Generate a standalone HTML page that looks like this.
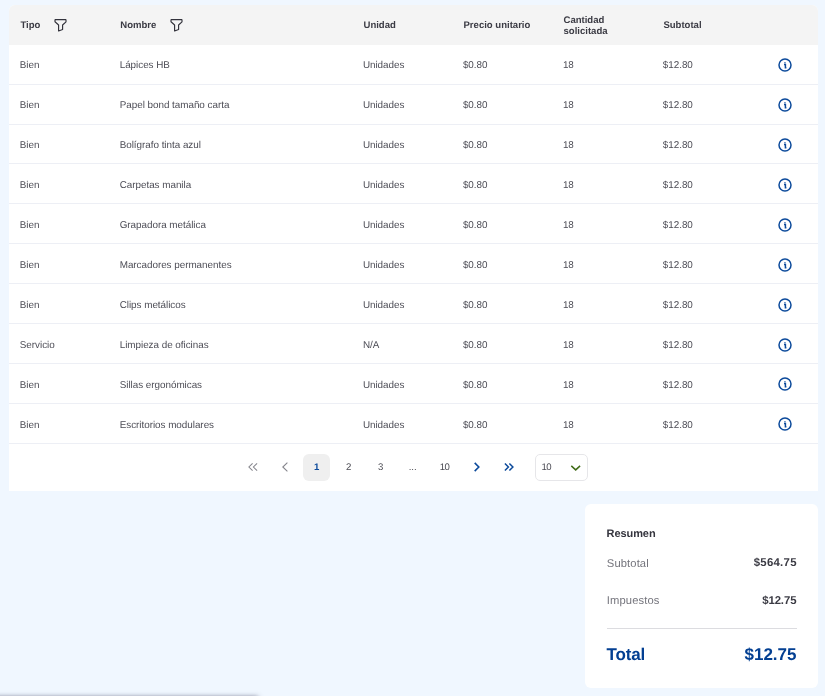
<!DOCTYPE html>
<html lang="es">
<head>
<meta charset="utf-8">
<title>Detalle de solicitud</title>
<style>
*{box-sizing:border-box;margin:0;padding:0}
html,body{width:825px;height:696px;overflow:hidden}
body{background:#f0f7ff;font-family:"Liberation Sans",sans-serif;color:#4d4d56;position:relative;font-size:9.9px;letter-spacing:-.03px;text-rendering:geometricPrecision}
.card{position:absolute;left:9px;top:5px;width:809px;height:485.500px;background:#fff;border-radius:6px 6px 0 0;overflow:hidden;will-change:transform}
.row{position:absolute;left:0;width:809px;height:39.930px}
.line{position:absolute;left:0;width:809px;height:1px;background:#edeff5}
.row.head{top:0;height:39.600px;background:#f4f4f4;font-weight:bold;color:#3b3b44;font-size:9.55px;letter-spacing:0}
.c{position:absolute;top:1.3px;line-height:12px;height:39.930px;display:flex;align-items:center;white-space:nowrap}
.c1{left:10.800px}.c2{left:110.700px}.c3{left:353.900px}.c4{left:453.900px}.c5{left:553.900px}.c6{left:653.800px}.c7{left:769.100px;top:.5px}
.head .c{top:.9px;margin-left:.6px}
.lo .c{top:2px}
.lo .c7{top:.5px}
.two{line-height:11px;white-space:normal}
.filt{margin-left:14px;display:block;position:relative;top:-.4px}
.info{display:block}
.pag{position:absolute;left:0;top:439px;width:809px;height:46.500px;font-size:9.6px}
.pg{position:absolute;top:9.700px;height:27.200px;width:26.700px;display:flex;align-items:center;justify-content:center;color:#4a4a52}
.pg.act{background:#efefef;border-radius:6px;color:#0c4a9b;font-weight:bold}
.sel{position:absolute;left:526px;top:10.200px;width:52.700px;height:26.400px;border:1px solid #e6e6e9;border-radius:5px;background:#fff}
.sel span{position:absolute;left:5.500px;top:0;height:24.400px;display:flex;align-items:center}
.n10{letter-spacing:-.5px}
.sel svg{position:absolute;left:33.500px;top:8.500px}
.sum{position:absolute;left:585.400px;top:504px;width:232.800px;height:183.500px;background:#fff;border-radius:6px;will-change:transform}
.sum div{position:absolute;white-space:nowrap;line-height:1.15}
.sum .t{left:21.600px;font-weight:bold;color:#35353e;font-size:11px;letter-spacing:-.08px}
.sum .l{left:21.800px;color:#74747c;font-size:11.2px;letter-spacing:.12px}
.sum .v{right:21.300px;font-weight:bold;color:#3b3b44;font-size:11.4px}
.sum hr{position:absolute;left:21.600px;right:21.300px;top:124px;border:none;border-top:1px solid #dcdce0}
.sum .tl{left:21.600px;color:#033f92;font-weight:bold;font-size:17px;letter-spacing:-.15px}
.sum .tv{right:21.300px;color:#033f92;font-weight:bold;font-size:17px;letter-spacing:0}
.shadow{position:absolute;left:-20px;top:697px;width:278px;height:40px;background:#fff;box-shadow:0 0 5px rgba(40,40,70,.68)}
</style>
</head>
<body>
<div class="card">
  <div class="row head">
    <div class="c c1">Tipo<svg class="filt" width="14" height="14" viewBox="0 0 14 14"><path d="M1.4 1.6h10.200a.4.400 0 0 1 .4.400v1.800L8.600 7v4.500L4.600 13V7L1 3.800V2a.4.400 0 0 1 .4-.4z" fill="none" stroke="#33333c" stroke-width="1.15" stroke-linejoin="round"/></svg></div>
    <div class="c c2">Nombre<svg class="filt" width="14" height="14" viewBox="0 0 14 14"><path d="M1.4 1.6h10.200a.4.400 0 0 1 .4.400v1.800L8.600 7v4.500L4.600 13V7L1 3.800V2a.4.400 0 0 1 .4-.4z" fill="none" stroke="#33333c" stroke-width="1.15" stroke-linejoin="round"/></svg></div>
    <div class="c c3">Unidad</div>
    <div class="c c4">Precio unitario</div>
    <div class="c c5 two">Cantidad<br>solicitada</div>
    <div class="c c6">Subtotal</div>
  </div>
  <div class="row" style="top:39.60px"><div class="c c1">Bien</div><div class="c c2">Lápices HB</div><div class="c c3">Unidades</div><div class="c c4">$0.80</div><div class="c c5">18</div><div class="c c6">$12.80</div><div class="c c7"><svg class="info" width="14" height="14" viewBox="0 0 14 14"><circle cx="7" cy="7" r="6" fill="none" stroke="#0c4a9b" stroke-width="1.5"/><rect x="6.2" y="4.3" width="1.5" height="1" fill="#0c4a9b"/><path d="M6 6.5h1.4v3.2h1" fill="none" stroke="#0c4a9b" stroke-width="1.5"/></svg></div></div>
  <div class="line" style="top:79px"></div>
  <div class="row" style="top:79.53px"><div class="c c1">Bien</div><div class="c c2">Papel bond tamaño carta</div><div class="c c3">Unidades</div><div class="c c4">$0.80</div><div class="c c5">18</div><div class="c c6">$12.80</div><div class="c c7"><svg class="info" width="14" height="14" viewBox="0 0 14 14"><circle cx="7" cy="7" r="6" fill="none" stroke="#0c4a9b" stroke-width="1.5"/><rect x="6.2" y="4.3" width="1.5" height="1" fill="#0c4a9b"/><path d="M6 6.5h1.4v3.2h1" fill="none" stroke="#0c4a9b" stroke-width="1.5"/></svg></div></div>
  <div class="line" style="top:119px"></div>
  <div class="row" style="top:119.46px"><div class="c c1">Bien</div><div class="c c2">Bolígrafo tinta azul</div><div class="c c3">Unidades</div><div class="c c4">$0.80</div><div class="c c5">18</div><div class="c c6">$12.80</div><div class="c c7"><svg class="info" width="14" height="14" viewBox="0 0 14 14"><circle cx="7" cy="7" r="6" fill="none" stroke="#0c4a9b" stroke-width="1.5"/><rect x="6.2" y="4.3" width="1.5" height="1" fill="#0c4a9b"/><path d="M6 6.5h1.4v3.2h1" fill="none" stroke="#0c4a9b" stroke-width="1.5"/></svg></div></div>
  <div class="line" style="top:158px"></div>
  <div class="row" style="top:159.39px"><div class="c c1">Bien</div><div class="c c2">Carpetas manila</div><div class="c c3">Unidades</div><div class="c c4">$0.80</div><div class="c c5">18</div><div class="c c6">$12.80</div><div class="c c7"><svg class="info" width="14" height="14" viewBox="0 0 14 14"><circle cx="7" cy="7" r="6" fill="none" stroke="#0c4a9b" stroke-width="1.5"/><rect x="6.2" y="4.3" width="1.5" height="1" fill="#0c4a9b"/><path d="M6 6.5h1.4v3.2h1" fill="none" stroke="#0c4a9b" stroke-width="1.5"/></svg></div></div>
  <div class="line" style="top:198px"></div>
  <div class="row" style="top:199.32px"><div class="c c1">Bien</div><div class="c c2">Grapadora metálica</div><div class="c c3">Unidades</div><div class="c c4">$0.80</div><div class="c c5">18</div><div class="c c6">$12.80</div><div class="c c7"><svg class="info" width="14" height="14" viewBox="0 0 14 14"><circle cx="7" cy="7" r="6" fill="none" stroke="#0c4a9b" stroke-width="1.5"/><rect x="6.2" y="4.3" width="1.5" height="1" fill="#0c4a9b"/><path d="M6 6.5h1.4v3.2h1" fill="none" stroke="#0c4a9b" stroke-width="1.5"/></svg></div></div>
  <div class="line" style="top:238px"></div>
  <div class="row" style="top:239.25px"><div class="c c1">Bien</div><div class="c c2">Marcadores permanentes</div><div class="c c3">Unidades</div><div class="c c4">$0.80</div><div class="c c5">18</div><div class="c c6">$12.80</div><div class="c c7"><svg class="info" width="14" height="14" viewBox="0 0 14 14"><circle cx="7" cy="7" r="6" fill="none" stroke="#0c4a9b" stroke-width="1.5"/><rect x="6.2" y="4.3" width="1.5" height="1" fill="#0c4a9b"/><path d="M6 6.5h1.4v3.2h1" fill="none" stroke="#0c4a9b" stroke-width="1.5"/></svg></div></div>
  <div class="line" style="top:278px"></div>
  <div class="row lo" style="top:279.18px"><div class="c c1">Bien</div><div class="c c2">Clips metálicos</div><div class="c c3">Unidades</div><div class="c c4">$0.80</div><div class="c c5">18</div><div class="c c6">$12.80</div><div class="c c7"><svg class="info" width="14" height="14" viewBox="0 0 14 14"><circle cx="7" cy="7" r="6" fill="none" stroke="#0c4a9b" stroke-width="1.5"/><rect x="6.2" y="4.3" width="1.5" height="1" fill="#0c4a9b"/><path d="M6 6.5h1.4v3.2h1" fill="none" stroke="#0c4a9b" stroke-width="1.5"/></svg></div></div>
  <div class="line" style="top:318px"></div>
  <div class="row lo" style="top:319.11px"><div class="c c1">Servicio</div><div class="c c2">Limpieza de oficinas</div><div class="c c3">N/A</div><div class="c c4">$0.80</div><div class="c c5">18</div><div class="c c6">$12.80</div><div class="c c7"><svg class="info" width="14" height="14" viewBox="0 0 14 14"><circle cx="7" cy="7" r="6" fill="none" stroke="#0c4a9b" stroke-width="1.5"/><rect x="6.2" y="4.3" width="1.5" height="1" fill="#0c4a9b"/><path d="M6 6.5h1.4v3.2h1" fill="none" stroke="#0c4a9b" stroke-width="1.5"/></svg></div></div>
  <div class="line" style="top:358px"></div>
  <div class="row lo" style="top:359.04px"><div class="c c1">Bien</div><div class="c c2">Sillas ergonómicas</div><div class="c c3">Unidades</div><div class="c c4">$0.80</div><div class="c c5">18</div><div class="c c6">$12.80</div><div class="c c7"><svg class="info" width="14" height="14" viewBox="0 0 14 14"><circle cx="7" cy="7" r="6" fill="none" stroke="#0c4a9b" stroke-width="1.5"/><rect x="6.2" y="4.3" width="1.5" height="1" fill="#0c4a9b"/><path d="M6 6.5h1.4v3.2h1" fill="none" stroke="#0c4a9b" stroke-width="1.5"/></svg></div></div>
  <div class="line" style="top:398px"></div>
  <div class="row lo" style="top:398.97px"><div class="c c1">Bien</div><div class="c c2">Escritorios modulares</div><div class="c c3">Unidades</div><div class="c c4">$0.80</div><div class="c c5">18</div><div class="c c6">$12.80</div><div class="c c7"><svg class="info" width="14" height="14" viewBox="0 0 14 14"><circle cx="7" cy="7" r="6" fill="none" stroke="#0c4a9b" stroke-width="1.5"/><rect x="6.2" y="4.3" width="1.5" height="1" fill="#0c4a9b"/><path d="M6 6.5h1.4v3.2h1" fill="none" stroke="#0c4a9b" stroke-width="1.5"/></svg></div></div>
  <div class="line" style="top:438px"></div>
  <div class="pag">
    <div class="pg" style="left:230.25px"><svg width="12" height="12" viewBox="0 0 12 12"><path d="M5.600 2.300L1.900 6l3.700 3.700M10.100 2.300L6.400 6l3.700 3.700" fill="none" stroke="#85858c" stroke-width="1.05"/></svg></div>
    <div class="pg" style="left:262.25px"><svg width="12" height="12" viewBox="0 0 12 12"><path d="M8.400 1.600L3.800 6l4.600 4.400" fill="none" stroke="#85858c" stroke-width="1.1"/></svg></div>
    <div class="pg act" style="left:294.25px">1</div>
    <div class="pg" style="left:326.25px">2</div>
    <div class="pg" style="left:358.25px">3</div>
    <div class="pg" style="left:390.25px">...</div>
    <div class="pg" style="left:422.25px"><span class="n10">10</span></div>
    <div class="pg" style="left:454.25px"><svg width="12" height="12" viewBox="0 0 12 12"><path d="M3.700 1.900L7.800 6 3.700 10.100" fill="none" stroke="#0c4a9b" stroke-width="1.6"/></svg></div>
    <div class="pg" style="left:486.25px"><svg width="12" height="12" viewBox="0 0 12 12"><path d="M1.900 2.500L5.400 6 1.900 9.500M6.400 2.500L9.900 6 6.400 9.500" fill="none" stroke="#0c4a9b" stroke-width="1.5"/></svg></div>
    <div class="sel"><span class="n10">10</span><svg width="12" height="8" viewBox="0 0 12 8"><path d="M1.300 1.900L5.700 5.900l4.400-4" fill="none" stroke="#3f6b16" stroke-width="1.450"/></svg></div>
  </div>
</div>
<div class="sum">
  <div class="t" style="top:23.800px">Resumen</div>
  <div class="l" style="top:53.900px">Subtotal</div><div class="v" style="top:52.700px;letter-spacing:.27px;margin-right:-.27px">$564.75</div>
  <div class="l" style="top:90.500px">Impuestos</div><div class="v" style="top:90.500px;letter-spacing:-.1px;margin-right:.1px">$12.75</div>
  <hr>
  <div class="tl" style="top:140.600px">Total</div><div class="tv" style="top:140.600px">$12.75</div>
</div>
<div class="shadow"></div>
</body>
</html>
